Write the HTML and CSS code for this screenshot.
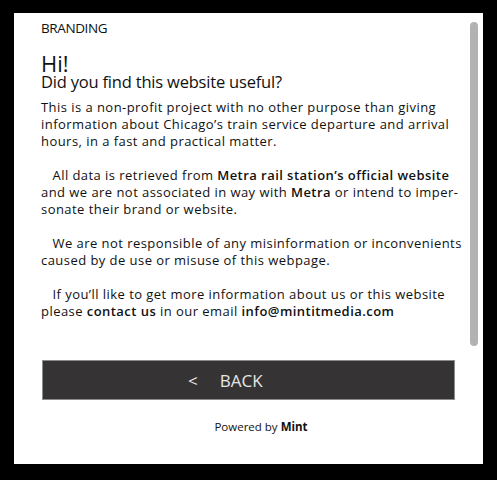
FILE: index.html
```html
<!DOCTYPE html>
<html lang="en">
<head>
<meta charset="utf-8">
<title>About</title>
<link rel="stylesheet" href="styles.css">
</head>
<body>
<div class="panel">
  <div class="scrollbar"></div>
  <div class="brand">BRANDING</div>
  <h1 class="hi">Hi!</h1>
  <h2 class="question">Did you find this website useful?</h2>
  <div class="copy">
    <p>This is a non-profit project with no other purpose than giving<br>information about Chicago’s train service departure and arrival<br>hours, in a fast and practical matter.</p>
    <p>&nbsp;&nbsp;&nbsp;All data is retrieved from <b>Metra rail station’s official website</b><br>and we are not associated in way with <b>Metra</b> or intend to imper-<br>sonate their brand or website.</p>
    <p>&nbsp;&nbsp;&nbsp;We are not responsible of any misinformation or inconvenients<br>caused by de use or misuse of this webpage.</p>
    <p>&nbsp;&nbsp;&nbsp;If you’ll like to get more information about us or this website<br>please <b>contact us</b> in our email <b>info@mintitmedia.com</b></p>
  </div>
  <button class="back"><span class="chev">&lt;</span><span>BACK</span></button>
  <div class="powered">Powered by <b>Mint</b></div>
</div>
</body>
</html>
```
FILE: styles.css
```css
html, body {
  margin: 0;
  padding: 0;
  background: #000;
}
body {
  width: 497px;
  height: 480px;
  padding-top: 13px;
  box-sizing: border-box;
  font-family: "Open Sans", "Liberation Sans", sans-serif;
  color: #111;
}
.panel {
  position: relative;
  margin-left: 14px;
  width: 469px;
  height: 451px;
  background: #fff;
  box-sizing: border-box;
  padding: 6px 0 0 27px;
}
.scrollbar {
  position: absolute;
  left: 456px;
  top: 9px;
  width: 8px;
  height: 324px;
  border-radius: 4px;
  background: #b2b2b2;
}
.brand {
  font-size: 13.5px;
  line-height: 18px;
  letter-spacing: -0.4px;
}
.hi {
  margin: 15.5px 0 0;
  font-weight: normal;
  font-size: 22px;
  line-height: 20px;
}
.question {
  margin: 0;
  font-weight: normal;
  font-size: 16.5px;
  line-height: 18px;
  letter-spacing: -0.2px;
}
.copy {
  margin-top: 8.5px;
  font-size: 13px;
  line-height: 17px;
  letter-spacing: 0.45px;
  white-space: nowrap;
}
.copy p {
  margin: 0 0 17px;
}
.copy b {
  font-weight: 600;
}
.back {
  display: flex;
  align-items: center;
  gap: 22px;
  margin: 40px 0 0 1px;
  width: 413px;
  height: 40px;
  padding: 0 0 0 145px;
  box-sizing: border-box;
  background: #353334;
  border: 1px solid #8c8c8c;
  color: #e6e6e6;
  font-family: inherit;
  font-size: 17px;
}
.powered {
  margin-top: 19px;
  width: 440px;
  text-align: center;
  font-size: 11.5px;
  color: #111;
}
.powered b {
  font-weight: 700;
}
```
